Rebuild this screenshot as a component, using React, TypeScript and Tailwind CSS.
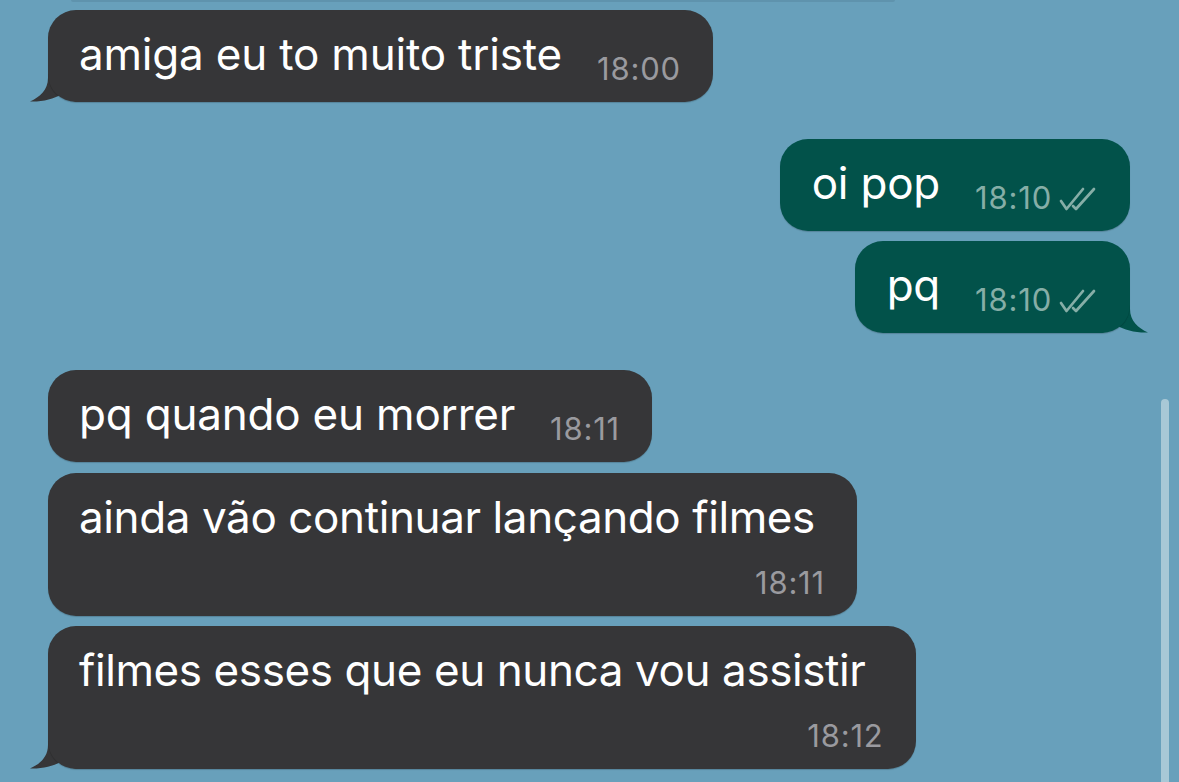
import React from "react";

const FONT = { fontFamily: "Inter, 'Noto Sans', sans-serif" };

function Checks() {
  return (
    <svg width="42" height="26" viewBox="0 0 42 26" className="ml-[6px] mb-[2px]" fill="none" stroke="#86aea7" strokeWidth="2.7" strokeLinecap="round" strokeLinejoin="round">
      <path d="M3 15 L8.5 23 L25 3" />
      <path d="M15 20 L18 23 L36 3" />
    </svg>
  );
}

function LeftTail() {
  return (
    <svg width="60" height="52" viewBox="0 0 60 52" className="absolute left-[-20px] bottom-0" fill="#363638">
      <path d="M20 0 L20 28 C20 40 12 47 2 51.5 C14 52 26 49 33 44.5 C38 49 44 52 54 52 L60 52 L60 0 Z" />
    </svg>
  );
}

function RightTail() {
  return (
    <svg width="60" height="52" viewBox="0 0 60 52" className="absolute right-[-20px] bottom-0" fill="#02524a">
      <path d="M40 0 L40 28 C40 40 48 47 58 51.5 C46 52 34 49 27 44.5 C22 49 16 52 6 52 L0 52 L0 0 Z" />
    </svg>
  );
}

function InBubble({ text, time, tail }: { text: string; time: string; tail?: boolean }) {
  return (
    <div className="relative self-start">
      {tail && <LeftTail />}
      <div className="relative flex flex-row items-start rounded-[28px] bg-[#363638] pl-[31px] pr-[32px] pt-[18px] pb-[17px] shadow-[0_1px_1px_rgba(0,0,0,0.18)]">
        <span className="text-[44px] leading-[52px] text-white tracking-[-0.2px]">{text}</span>
        <span className="ml-[35px] mt-[25px] text-[31px] leading-[32px] tracking-[0.8px] text-[#9a9a9f]">{time}</span>
      </div>
    </div>
  );
}

function InBubble2({ text, time, tail, extra }: { text: string; time: string; tail?: boolean; extra: string }) {
  return (
    <div className="relative self-start">
      {tail && <LeftTail />}
      <div className="relative flex flex-col rounded-[28px] bg-[#363638] pl-[31px] pr-[32px] pt-[18px] pb-[17px] shadow-[0_1px_1px_rgba(0,0,0,0.18)]">
        <span className={`text-[44px] leading-[52px] text-white tracking-[-0.4px] ${extra}`}>{text}</span>
        <span className="self-end mt-[24px] text-[31px] leading-[32px] tracking-[0.8px] text-[#9a9a9f]">{time}</span>
      </div>
    </div>
  );
}

function OutBubble({ text, time, tail }: { text: string; time: string; tail?: boolean }) {
  return (
    <div className="relative self-end">
      {tail && <RightTail />}
      <div className="relative flex flex-row items-start rounded-[28px] bg-[#02524a] pl-[32px] pr-[30px] pt-[18px] pb-[17px] shadow-[0_1px_1px_rgba(0,0,0,0.18)]">
        <span className="text-[44px] leading-[52px] text-white tracking-[-0.2px]">{text}</span>
        <span className="ml-[35px] mt-[25px] flex flex-row items-end text-[31px] leading-[32px] tracking-[0.8px] text-[#86aea7]">
          {time}
          <Checks />
        </span>
      </div>
    </div>
  );
}

export default function App() {
  return (
    <div className="relative h-[782px] w-[1179px] overflow-hidden bg-[#68a0bb]" style={FONT}>
      <div className="ml-[71px] h-[2px] w-[824px] rounded-b-[4px] bg-[#5f93ad]" />
      <div className="flex flex-col pl-[48px] pr-[49px] pt-[8px]">
        <InBubble text="amiga eu to muito triste" time="18:00" tail />
        <div className="h-[37px]" />
        <OutBubble text="oi pop" time="18:10" />
        <div className="h-[10px]" />
        <OutBubble text="pq" time="18:10" tail />
        <div className="h-[37px]" />
        <InBubble text="pq quando eu morrer" time="18:11" />
        <div className="h-[11px]" />
        <InBubble2 text="ainda vão continuar lançando filmes" time="18:11" extra="pr-[10px]" />
        <div className="h-[10px]" />
        <InBubble2 text="filmes esses que eu nunca vou assistir" time="18:12" tail extra="pr-[18px]" />
      </div>
      <div className="absolute left-[1161px] top-[399px] h-[400px] w-[8px] rounded-full bg-[#a8c8d6]" />
    </div>
  );
}
